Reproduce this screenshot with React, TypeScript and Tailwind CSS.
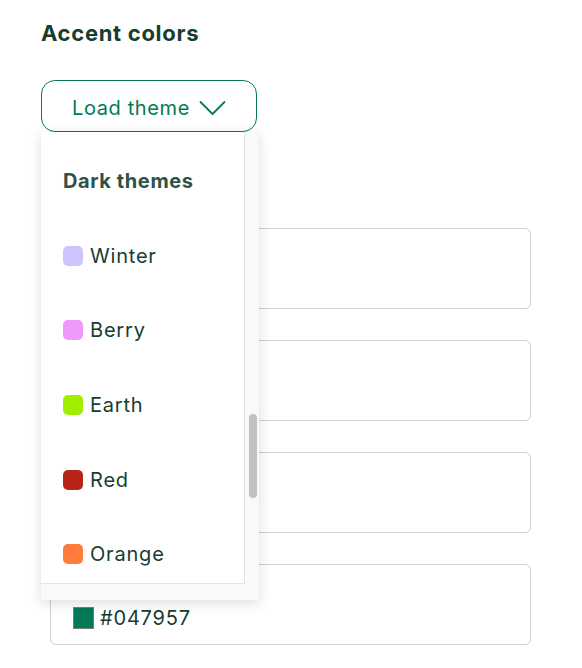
const themes = [
  { name: "Winter", color: "bg-[#cdc4fd]" },
  { name: "Berry", color: "bg-[#ef99fb]" },
  { name: "Earth", color: "bg-[#a0ee00]" },
  { name: "Red", color: "bg-[#b6241a]" },
  { name: "Orange", color: "bg-[#fe7b3a]" },
]

const App = () => {
  return (
    <div className="w-[582px] h-[668px] overflow-hidden bg-white pl-[41px] pt-[20px] font-['Inter',sans-serif]">
      {/* Heading */}
      <h2 className="text-[22px] font-bold text-[#173d30] leading-[26px] tracking-[0.7px]">Accent colors</h2>

      {/* Load theme button */}
      <button className="mt-[34px] w-[216px] h-[52px] rounded-[14px] border border-[#047957] flex items-center justify-center gap-[9px] pt-[3px] text-[#047957] text-[20px] tracking-[0.6px]">
        <span>Load theme</span>
        <svg width="27" height="16" viewBox="0 0 27 16" fill="none">
          <path d="M1.5 2 L13.5 14 L25.5 2" stroke="#047957" strokeWidth="1.8" strokeLinecap="round" strokeLinejoin="round" />
        </svg>
      </button>

      <div className="relative pt-[96px]">
        {/* Color fields */}
        <div className="ml-[9px] w-[481px] flex flex-col gap-[31px]">
          <div className="h-[81px] rounded-[6px] border border-[#cdd3d1]" />
          <div className="h-[81px] rounded-[6px] border border-[#cdd3d1]" />
          <div className="h-[81px] rounded-[6px] border border-[#cdd3d1]" />
          <div className="h-[81px] rounded-[6px] border border-[#cdd3d1] flex items-start pt-[42px] pl-[22px] gap-[6px]">
            <div className="w-[21px] h-[22px] bg-[#047957] border border-[#7b7b7b]" />
            <span className="text-[20px] leading-[22px] text-[#173d30] tracking-[0.8px]">#047957</span>
          </div>
        </div>

        {/* Dropdown menu */}
        <div className="absolute left-0 top-0 w-[218px] h-[468px] bg-[#f9f9f9] shadow-[0_3px_12px_rgba(0,0,0,0.14)] flex flex-col">
          <div className="flex h-[452px]">
            <div className="w-[204px] h-[452px] overflow-hidden bg-white border-r border-b border-[#e4e4e4] pt-[12px]">
              <div className="h-[74.6px] flex items-center pl-[22px] text-[20px] font-bold text-[#2e5246] tracking-[0.6px]">Dark themes</div>
              {themes.map((t) => (
                <div key={t.name} className="h-[74.6px] flex items-center pl-[22px] gap-[7px]">
                  <div className={`w-[20px] h-[20px] rounded-[5px] ${t.color}`} />
                  <span className="text-[20px] text-[#173d30] tracking-[0.8px]">{t.name}</span>
                </div>
              ))}
            </div>
            <div className="flex-1 pt-[282px] pl-[4px]">
              <div className="w-[8px] h-[84px] rounded-full bg-[#c1c1c1]" />
            </div>
          </div>
          <div className="h-[16px]" />
        </div>
      </div>
    </div>
  )
}

export default App
